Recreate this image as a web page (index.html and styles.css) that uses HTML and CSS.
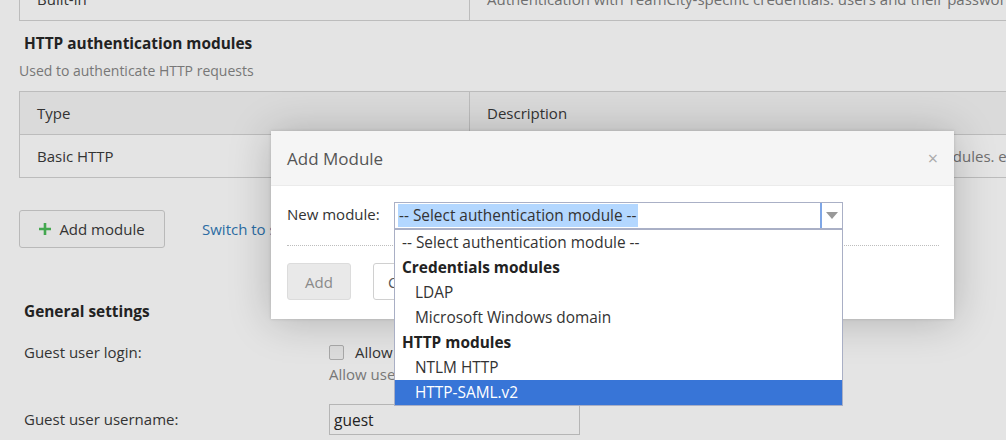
FILE: index.html
```html
<!DOCTYPE html>
<html>
<head>
<meta charset="utf-8">
<link rel="stylesheet" href="styles.css">
</head>
<body>
<div class="page">
  <table class="grid top">
    <tr><td class="c1">Built-in</td><td class="c2 desc">Authentication with TeamCity-specific credentials: users and their passwords are stored in TeamCity</td></tr>
  </table>
  <h3 class="heading">HTTP authentication modules</h3>
  <div class="note">Used to authenticate HTTP requests</div>
  <table class="grid">
    <tr class="head"><th class="c1">Type</th><th class="c2">Description</th></tr>
    <tr><td class="c1">Basic HTTP</td><td class="c2 desc">Authentication via HTTP headers, supports enabled credentials modules. e.g. LDAP</td></tr>
  </table>
  <div class="actions">
    <button class="btn add-btn"><svg class="plus" width="12" height="12" viewBox="0 0 12 12"><path d="M6 0v12M0 6h12" stroke="#43a74f" stroke-width="2.6"/></svg>Add module</button>
    <a class="link">Switch to simple mode</a>
  </div>
  <h3 class="heading gs">General settings</h3>
  <div class="form-row">
    <div class="label">Guest user login:</div>
    <div class="field">
      <label class="check"><span class="box"></span>Allow login as guest user</label>
      <div class="hint">Allow users to log in as guest</div>
    </div>
  </div>
  <div class="form-row user">
    <div class="label">Guest user username:</div>
    <div class="field"><div class="input">guest</div></div>
  </div>
</div>

<div class="modal">
  <div class="modal-head">
    <span class="title">Add Module</span>
    <span class="close">&#215;</span>
  </div>
  <div class="modal-body">
    <div class="sel-row">
      <span class="sel-label">New module:</span>
      <div class="select">
        <div class="sel-text"><span class="hl">-- Select authentication module --</span></div>
        <div class="sel-arrow"></div>
      </div>
    </div>
    <div class="sep"></div>
    <div class="btns">
      <button class="btn mbtn disabled">Add</button>
      <button class="btn mbtn">Cancel</button>
    </div>
  </div>
</div>

<ul class="dropdown">
  <li class="opt first">-- Select authentication module --</li>
  <li class="grp">Credentials modules</li>
  <li class="opt">LDAP</li>
  <li class="opt">Microsoft Windows domain</li>
  <li class="grp">HTTP modules</li>
  <li class="opt">NTLM HTTP</li>
  <li class="opt selected">HTTP-SAML.v2</li>
</ul>
</body>
</html>
```
FILE: styles.css
```css
html, body {
  margin: 0;
  padding: 0;
}
body {
  width: 1006px;
  height: 440px;
  overflow: hidden;
  position: relative;
  background: #e4e4e4;
  font-family: "Open Sans", "Noto Sans", sans-serif;
  font-size: 15px;
  color: #333;
}
.page {
  padding-left: 19px;
}
.grid {
  border-collapse: collapse;
  width: 1100px;
  table-layout: fixed;
}
.grid td, .grid th {
  border: 1px solid #bcbcbc;
  height: 42px;
  padding: 0 0 0 17px;
  text-align: left;
  font-weight: normal;
  white-space: nowrap;
  overflow: hidden;
  font-size: 15px;
  color: #333;
}
.grid .c1 { width: 432px; }
.grid .desc { color: #6f6f6f; }
.grid .head th { background: #dadada; }
.top { margin-top: -23px; }
.heading {
  margin: 0;
  padding-left: 5px;
  font-size: 15.4px;
  font-weight: bold;
  color: #222;
}
.top + .heading { margin-top: 12px; }
.note {
  margin-top: 7px;
  margin-bottom: 11px;
  font-size: 14px;
  color: #777;
}
.actions {
  display: flex;
  align-items: center;
  margin-top: 32px;
  gap: 37px;
}
.btn {
  font-family: inherit;
  font-size: 15px;
  border: 1px solid #b9b9b9;
  border-radius: 3px;
  background: #e1e1e1;
  color: #333;
  padding: 0;
}
.add-btn {
  width: 146px;
  height: 38px;
  display: flex;
  align-items: center;
  justify-content: center;
  gap: 8px;
}
.plus { display: block; }
.link { color: #2b6ca3; }
.gs { margin-top: 53px; }
.form-row {
  display: flex;
  padding-left: 5px;
  margin-top: 20px;
}
.label { width: 305px; }
.check {
  display: flex;
  align-items: center;
  gap: 11px;
}
.box {
  width: 13px;
  height: 13px;
  border: 1px solid #a8a8a8;
  border-radius: 2px;
  background: #dcdcdc;
}
.hint {
  color: #777;
  margin-top: 2px;
}
.form-row.user {
  margin-top: 20px;
  align-items: center;
}
.input {
  width: 245px;
  height: 29px;
  border: 1px solid #b5b5b5;
  background: #e4e4e4;
  padding-left: 4px;
  display: flex;
  align-items: center;
  font-size: 15.5px;
  color: #222;
}
.form-row.user .label { margin-top: -2px; }

/* modal */
.modal {
  position: absolute;
  left: 271px;
  top: 131px;
  width: 683px;
  height: 188px;
  background: #fff;
  box-shadow: 0 2px 40px rgba(0,0,0,0.22), 0 0 3px rgba(0,0,0,0.15);
}
.modal-head {
  height: 54px;
  background: #f5f5f5;
  border-bottom: 1px solid #ebebeb;
  display: flex;
  align-items: center;
  justify-content: space-between;
  padding: 0 16px;
}
.title {
  font-size: 17px;
  color: #555;
}
.close {
  font-size: 18px;
  color: #aaa;
}
.modal-body {
  padding: 16px 15px 0 16px;
}
.sel-row {
  display: flex;
  align-items: center;
}
.sel-label {
  width: 107px;
  margin-top: -4px;
}
.select {
  width: 447px;
  height: 25px;
  border: 1px solid #aab0c6;
  display: flex;
}
.sel-text {
  flex: 1;
  border-right: 2px solid #7ea6e6;
  padding: 1px 0 0 3px;
}
.hl {
  display: inline-block;
  background: #b3d7ff;
  font-size: 15.4px;
  line-height: 23px;
  padding: 0 1px;
  color: #333;
}
.sel-arrow {
  width: 20px;
  position: relative;
}
.sel-arrow::after {
  content: "";
  position: absolute;
  left: 4px;
  top: 9px;
  border-left: 6px solid transparent;
  border-right: 6px solid transparent;
  border-top: 7px solid #999;
}
.sep {
  border-top: 1px dotted #bdbdbd;
  margin-top: 16px;
}
.btns {
  display: flex;
  gap: 22px;
  margin-top: 17px;
}
.mbtn {
  height: 37px;
  background: #fff;
  border-color: #d0d0d0;
  color: #555;
  padding: 0 14px;
}
.mbtn.disabled {
  width: 64px;
  background: #e9e9e9;
  color: #8a8a8a;
  border-color: #dcdcdc;
}

/* dropdown */
.dropdown {
  position: absolute;
  left: 394px;
  top: 229px;
  width: 447px;
  margin: 0;
  padding: 0;
  list-style: none;
  background: #fff;
  border: 1px solid #a9afc5;
  font-size: 15.4px;
  color: #333;
}
.dropdown li {
  height: 25px;
  line-height: 25px;
  white-space: nowrap;
}
.opt { padding-left: 20px; }
.opt.first { padding-left: 7px; }
.grp { padding-left: 7px; font-weight: bold; color: #222; }
.selected { background: #3875d7; color: #fff; }
```
